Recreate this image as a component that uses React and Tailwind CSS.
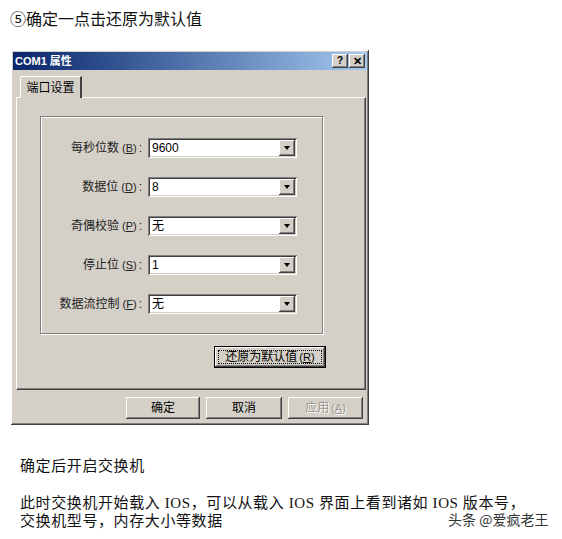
const raised =
  "bg-[#d4d0c8] shadow-[inset_-1px_-1px_#404040,inset_1px_1px_#ffffff,inset_-2px_-2px_#808080,inset_2px_2px_#d4d0c8]";
const sunken =
  "bg-white shadow-[inset_1px_1px_#808080,inset_-1px_-1px_#ffffff,inset_2px_2px_#404040,inset_-2px_-2px_#d4d0c8]";

const uiFont = "font-['Liberation_Sans','Noto_Sans_CJK_SC',sans-serif]";

function Combo({ value }) {
  return (
    <div className={`${sunken} relative w-[149px] h-[20px] flex items-center`}>
      <span className="pl-[4px] text-[12px] leading-none text-black">{value}</span>
      <div className={`${raised} absolute right-[2px] top-[2px] w-[16px] h-[16px] flex items-center justify-center`}>
        <div className="w-0 h-0 border-l-[3.5px] border-r-[3.5px] border-t-[4px] border-l-transparent border-r-transparent border-t-black" />
      </div>
    </div>
  );
}

function Row({ label, hot, value }) {
  return (
    <div className="flex items-center h-[20px]">
      <div className="w-[101px] text-right text-[12px] leading-none text-[#222] whitespace-nowrap">
        {label}
        <span className="text-[11px] ml-[3px]">
          (<u>{hot}</u>)
        </span>
        <span className="ml-[2px]">:</span>
      </div>
      <div className="ml-[6px]">
        <Combo value={value} />
      </div>
    </div>
  );
}

function WinButton({ children, w, disabled }) {
  return (
    <div
      className={`${raised} h-[22px] flex items-center justify-center text-[12px] leading-none ${
        disabled ? "text-[#9a978f] [text-shadow:1px_1px_#ffffff]" : "text-black"
      }`}
      style={{ width: w }}
    >
      {children}
    </div>
  );
}

export default function App() {
  const rows = [
    { label: "每秒位数", hot: "B", value: "9600" },
    { label: "数据位", hot: "D", value: "8" },
    { label: "奇偶校验", hot: "P", value: "无" },
    { label: "停止位", hot: "S", value: "1" },
    { label: "数据流控制", hot: "F", value: "无" },
  ];

  return (
    <div className="relative w-[562px] h-[539px] bg-white overflow-hidden font-['Liberation_Serif','Noto_Sans_CJK_SC',serif] text-[#111]">
      <p className="pl-[10px] pt-[8px] text-[16px] leading-[24px]">⑤确定一点击还原为默认值</p>

      {/* dialog */}
      <div className={`${raised} ${uiFont} ml-[11px] mt-[18px] w-[358px] h-[375px] p-[2px] flex flex-col`}>
        <div className="h-[18px] flex items-center bg-gradient-to-r from-[#0a246a] to-[#a6caf0] pl-[2px] pr-[2px]">
          <span className="text-white text-[11px] font-bold leading-none">COM1 属性</span>
          <div className="ml-auto flex gap-[1px]">
            <div className={`${raised} w-[16px] h-[14px] flex items-center justify-center text-[10px] font-bold leading-none text-black`}>?</div>
            <div className={`${raised} w-[16px] h-[14px] flex items-center justify-center text-[11px] font-bold leading-none text-black`}>✕</div>
          </div>
        </div>

        {/* tabs */}
        <div className="ml-[3px] mr-[1px] mt-[6px] flex flex-col">
          <div className="flex pl-[4px]">
            <div className="relative z-10 -mb-[1px] h-[22px] w-[62px] bg-[#d4d0c8] border-t border-l border-white border-r-2 border-r-[#404040] rounded-tl-[2px] flex items-center justify-center text-[12px] leading-none text-black">
              端口设置
            </div>
          </div>
          <div className="h-[293px] border-t border-l border-white border-r border-b border-r-[#404040] border-b-[#404040] shadow-[inset_-1px_-1px_#808080]">
            <div className="ml-[23px] mt-[18px] w-[283px] h-[218px] border border-[#808080] shadow-[1px_1px_#ffffff,inset_1px_1px_#ffffff] pt-[21px] flex flex-col gap-[19px]">
              {rows.map((r) => (
                <Row key={r.label} {...r} />
              ))}
            </div>
            <div className="ml-[197px] mt-[12px] w-[112px] h-[22px] border border-black">
              <div className={`${raised} w-full h-full p-[3px]`}>
                <div className="w-full h-full border border-dotted border-black flex items-center justify-center text-[12px] leading-none text-black">
                  还原为默认值
                  <span className="text-[11px] ml-[2px]">
                    (<u>R</u>)
                  </span>
                </div>
              </div>
            </div>
          </div>
        </div>

        <div className="mt-[7px] pr-[4px] flex justify-end gap-[6px]">
          <WinButton w={74}>确定</WinButton>
          <WinButton w={76}>取消</WinButton>
          <WinButton w={75} disabled>
            应用
            <span className="text-[11px] ml-[2px]">
              (<u>A</u>)
            </span>
          </WinButton>
        </div>
      </div>

      <div className="pl-[20px] text-[15px] leading-[18px] tracking-[0.6px] text-[#111]">
        <p className="mt-[32px]">确定后开启交换机</p>
        <p className="mt-[19px]">此时交换机开始载入 IOS，可以从载入 IOS 界面上看到诸如 IOS 版本号，</p>
        <p>交换机型号，内存大小等数据</p>
      </div>

      <div className="absolute left-[448px] top-[510px] text-[14px] leading-[18px] text-[#333] font-['Noto_Sans_CJK_SC',sans-serif] whitespace-nowrap">
        头条 @爱疯老王
      </div>
    </div>
  );
}
